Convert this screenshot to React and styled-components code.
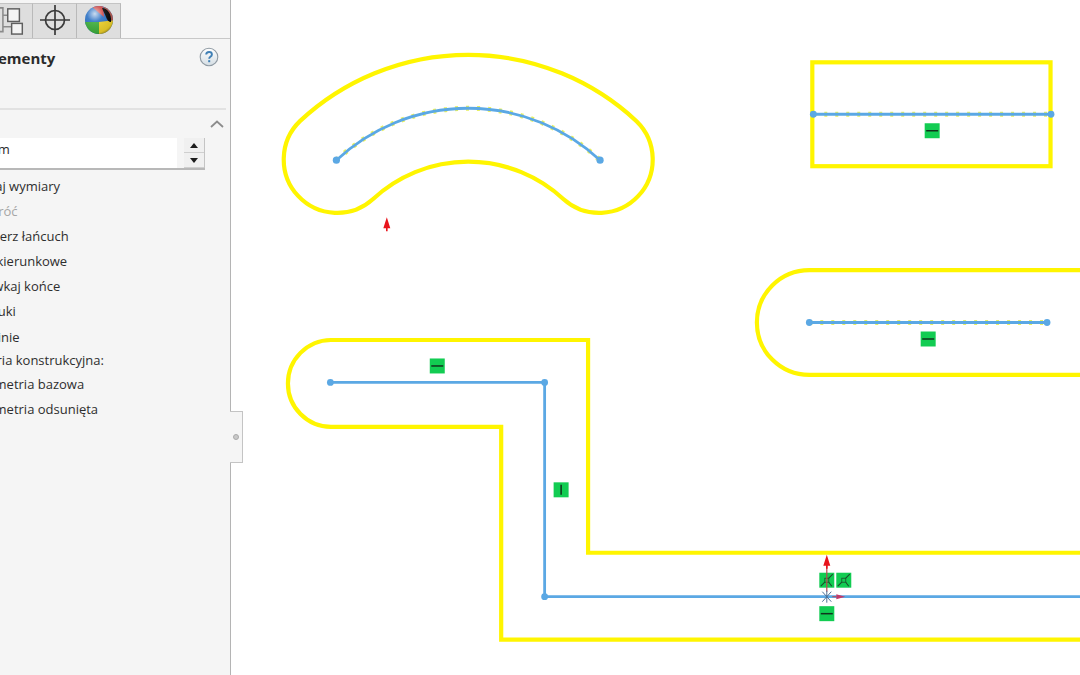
import styled, { createGlobalStyle } from "styled-components";

const GlobalStyle = createGlobalStyle`
  html, body {
    margin: 0;
    padding: 0;
    background: #ffffff;
  }
  * {
    box-sizing: border-box;
  }
`;

const YELLOW = "#fff500";
const BLUE = "#5ba8e4";

const opcje = [
  { tekst: "Dodaj wymiary", start: -30 },
  { tekst: "Odwróć", start: -30 },
  { tekst: "Wybierz łańcuch", start: -30 },
  { tekst: "Dwukierunkowe", start: -31 },
  { tekst: "Zakrywkaj końce", start: -40 },
  { tekst: "Łuki", start: -9, h: 26 },
  { tekst: "Linie", start: -9, h: 23 },
  { tekst: "Geometria konstrukcyjna:", start: -52, h: 24 },
  { tekst: "Geometria bazowa", start: -30 },
  { tekst: "Geometria odsunięta", start: -30 },
];

function IkonaDrzewo() {
  return (
    <svg width="33" height="32" viewBox="0 0 33 32">
      <g fill="none" stroke="#8b8b8b" strokeWidth="1.6">
        <path d="M-1 3.5H3V28H-1M3 11H8M3 23H12" />
      </g>
      <g fill="#f4f4f4" stroke="#5f5f5f" strokeWidth="1.5">
        <rect x="8" y="4.5" width="12" height="13" />
        <rect x="12" y="19.5" width="11" height="11" />
      </g>
    </svg>
  );
}

function IkonaCelownik() {
  return (
    <svg width="32" height="32" viewBox="0 0 32 32">
      <g fill="none" stroke="#3a3a3a" strokeWidth="1.7">
        <circle cx="16" cy="16" r="9.5" />
        <path d="M16 1v30M1 16h30" />
      </g>
    </svg>
  );
}

function IkonaKula() {
  return (
    <svg width="30" height="30" viewBox="0 0 30 30">
      <defs>
        <clipPath id="kula">
          <circle cx="15" cy="15" r="14" />
        </clipPath>
        <radialGradient id="polysk" cx="0.35" cy="0.28" r="0.8">
          <stop offset="0" stopColor="#ffffff" stopOpacity="0.75" />
          <stop offset="0.35" stopColor="#ffffff" stopOpacity="0.1" />
          <stop offset="0.85" stopColor="#000000" stopOpacity="0.08" />
          <stop offset="1" stopColor="#000000" stopOpacity="0.4" />
        </radialGradient>
      </defs>
      <g clipPath="url(#kula)">
        <rect width="30" height="30" fill="#2d72c4" />
        <path d="M0 17 L15 17 L15 30 L0 30Z" fill="#3fae3c" />
        <path d="M15 17 L30 15 L30 30 L15 30Z" fill="#eccf2a" />
        <path d="M6 0 L19 0 L20 12 L15 8Z" fill="#cf4d4a" />
        <path d="M19 0 L30 0 L30 15 L24 16Z" fill="#b55a50" />
        <path d="M18 3 C23 3 28 9 27 17 C25 17 23 15 22 12 C21 9 19 6 18 3Z" fill="#060606" />
      </g>
      <circle cx="15" cy="15" r="14" fill="url(#polysk)" />
    </svg>
  );
}

function IkonaPomoc() {
  return (
    <svg width="20" height="20" viewBox="0 0 20 20">
      <defs>
        <linearGradient id="pomoc" x1="0" y1="0" x2="0" y2="1">
          <stop offset="0" stopColor="#ffffff" />
          <stop offset="1" stopColor="#d4dde3" />
        </linearGradient>
      </defs>
      <circle cx="10" cy="10" r="8.8" fill="url(#pomoc)" stroke="#8f9aa3" strokeWidth="1.1" />
      <path
        d="M7.2 7.6c0-1.6 1.2-2.6 2.9-2.6s2.8 1 2.8 2.4c0 1.2-.7 1.8-1.5 2.4-.8.6-1.2 1-1.2 2"
        fill="none"
        stroke="#3f7fb5"
        strokeWidth="1.9"
      />
      <rect x="9.2" y="13.2" width="2" height="2" fill="#3f7fb5" />
    </svg>
  );
}

function Strzalka({ x, y }) {
  return <path d={`M${x} ${y - 7}L${x + 3.5} ${y + 4}H${x + 0.8}V${y + 7}H${x - 0.8}V${y + 4}H${x - 3.5}Z`} fill="#e8141c" />;
}

function Relacja({ x, y, pion }) {
  return (
    <g>
      <rect x={x - 7.5} y={y - 7.5} width="15" height="15" fill="#12cc52" />
      {pion ? (
        <path d={`M${x} ${y - 5}V${y + 5}`} stroke="#10331c" strokeWidth="1.5" />
      ) : (
        <path d={`M${x - 6} ${y}H${x + 6}`} stroke="#10331c" strokeWidth="1.5" />
      )}
    </g>
  );
}

function RelacjaPunkt({ x, y }) {
  return (
    <g>
      <rect x={x - 7.5} y={y - 7.5} width="15" height="15" fill="#12cc52" />
      <path d={`M${x - 6} ${y + 6}L${x - 2} ${y + 2}M${x + 2} ${y - 2}L${x + 6} ${y - 6}M${x + 2} ${y + 2}L${x + 5} ${y + 6}`} stroke="#1d4a2c" strokeWidth="1.1" fill="none" />
      <rect x={x - 2} y={y - 2} width="4" height="4" fill="none" stroke="#1d4a2c" strokeWidth="0.8" />
    </g>
  );
}

function Szkic() {
  return (
    <Rysunek viewBox="230 0 850 675">
      <g fill="none" stroke={YELLOW} strokeWidth="4.2">
        <path d="M372 199.1A140 140 0 0 1 563 199.1A53.5 53.5 0 0 0 636 120.9A247 247 0 0 0 299 120.9A53.5 53.5 0 0 0 372 199.1Z" />
        <rect x="812" y="62" width="238.5" height="104" />
        <path d="M1120 270H809A52.5 52.5 0 0 0 809 375H1120" />
        <path d="M1100 553H587.5V340H330A43.5 43.5 0 0 0 287 383.5A43.5 43.5 0 0 0 330 427H500.5V640H1100" />
      </g>

      <g fill="none" stroke="#e8f060" strokeWidth="5" strokeDasharray="3 8">
        <path d="M335.5 160A193.5 193.5 0 0 1 599.5 160" />
        <path d="M813 114H1051" />
        <path d="M809 322.5H1047" />
      </g>

      <g fill="none" stroke={BLUE} strokeWidth="2.8">
        <path d="M335.5 160A193.5 193.5 0 0 1 599.5 160" />
        <path d="M813 114H1051" />
        <path d="M809 322.5H1047" />
        <path d="M329.5 382.5H544V597H1080" />
      </g>

      <g fill={BLUE}>
        <circle cx="335.5" cy="160" r="3.6" />
        <circle cx="599.5" cy="160" r="3.6" />
        <circle cx="813" cy="114" r="3.4" />
        <circle cx="1051" cy="114" r="3.4" />
        <circle cx="809" cy="322.5" r="3.4" />
        <circle cx="1047" cy="322.5" r="3.4" />
        <circle cx="329.5" cy="382.5" r="3.4" />
        <circle cx="544" cy="382.5" r="3.4" />
        <circle cx="544" cy="597" r="3.4" />
      </g>

      <Relacja x={932} y={130.5} />
      <Relacja x={928} y={339} />
      <Relacja x={436.5} y={366} />
      <Relacja x={560.5} y={490} pion />
      <Relacja x={826.5} y={614} />
      <RelacjaPunkt x={826.5} y={580.5} />
      <RelacjaPunkt x={843.5} y={580.5} />

      <Strzalka x={386} y={224} />
      <path d="M826.5 565V592" stroke="#b8474f" strokeWidth="1.2" />
      <Strzalka x={826.5} y={562} />
      <path d="M836 594.5L845 597L836 599.5Z" fill="#c23a6a" />
      <path d="M832 597H836" stroke="#b8474f" strokeWidth="1" />
      <path d="M822 592L831 602M831 592L822 602M826.5 591V603" stroke="#4d6f95" strokeWidth="1" fill="none" />
    </Rysunek>
  );
}

export default function App() {
  return (
    <>
      <GlobalStyle />
      <Ekran>
        <Panel>
          <Zakladki>
            <Zakladka $szer={33}>
              <IkonaDrzewo />
            </Zakladka>
            <Zakladka $szer={44}>
              <IkonaCelownik />
            </Zakladka>
            <Zakladka $szer={44}>
              <IkonaKula />
            </Zakladka>
          </Zakladki>

          <Naglowek>
            <Tytul>Elementy</Tytul>
            <IkonaPomoc />
          </Naglowek>

          <Sekcja>
            <Chevron viewBox="0 0 14 8">
              <path d="M1 7L7 1.5L13 7" fill="none" stroke="#8c8c8c" strokeWidth="1.8" />
            </Chevron>
          </Sekcja>

          <PoleWiersz>
            <Pole>1.00mm</Pole>
            <Spinner>
              <SpinnerPrzycisk>
                <Trojkat />
              </SpinnerPrzycisk>
              <SpinnerPrzycisk>
                <Trojkat $dol />
              </SpinnerPrzycisk>
            </Spinner>
          </PoleWiersz>

          <Lista>
            {opcje.map((o) => (
              <Opcja key={o.tekst} $start={o.start} $h={o.h} $wylaczone={o.tekst === "Odwróć"}>
                {o.tekst}
              </Opcja>
            ))}
          </Lista>
        </Panel>

        <Uchwyt>
          <Kropka />
        </Uchwyt>

        <Plotno>
          <Szkic />
        </Plotno>
      </Ekran>
    </>
  );
}

const Ekran = styled.div`
  position: relative;
  display: flex;
  width: 1080px;
  height: 675px;
  overflow: hidden;
  background: #ffffff;
`;

const Panel = styled.aside`
  width: 231px;
  height: 100%;
  flex-shrink: 0;
  overflow: hidden;
  background: #f5f5f5;
  border-right: 1px solid #b4b4b4;
  font-family: "Open Sans", "Noto Sans", sans-serif;
  color: #2a2a2a;
`;

const Zakladki = styled.div`
  display: flex;
  height: 39px;
  padding-top: 3px;
  border-bottom: 1px solid #c8c8c8;
`;

const Zakladka = styled.div`
  width: ${(p) => p.$szer}px;
  display: flex;
  align-items: center;
  justify-content: center;
  padding-bottom: 2px;
  background: #dedede;
  border-right: 1px solid #b9b9b9;
  border-top: 1px solid #c4c4c4;
`;

const Naglowek = styled.div`
  display: flex;
  align-items: flex-start;
  justify-content: space-between;
  height: 71px;
  padding: 8px 7px 0 0;
  border-bottom: 2px solid #e2e2e2;
  margin-right: 4px;
`;

const Tytul = styled.h1`
  margin: 0 0 0 -15px;
  font-size: 15px;
  line-height: 22px;
  font-weight: 700;
  color: #2b2b2b;
`;

const Sekcja = styled.div`
  display: flex;
  justify-content: flex-end;
  align-items: center;
  height: 28px;
  padding-right: 6px;
`;

const Chevron = styled.svg`
  width: 14px;
  height: 8px;
`;

const PoleWiersz = styled.div`
  display: flex;
  gap: 7px;
  width: 205px;
  height: 32px;
  border-bottom: 2px solid #b8b8b8;
`;

const Pole = styled.div`
  flex: 1;
  margin-left: -40px;
  height: 30px;
  background: #ffffff;
  font-size: 13px;
  line-height: 23px;
`;

const Spinner = styled.div`
  display: flex;
  flex-direction: column;
  width: 21px;
  background: #f0f0f0;
  border-right: 1px solid #c4c4c4;
`;

const SpinnerPrzycisk = styled.div`
  flex: 1;
  display: flex;
  align-items: center;
  justify-content: center;
  border-bottom: 1px solid #cfcfcf;
`;

const Trojkat = styled.div`
  width: 0;
  height: 0;
  border-left: 4.5px solid transparent;
  border-right: 4.5px solid transparent;
  ${(p) => (p.$dol ? "border-top: 5px solid #1c1c1c;" : "border-bottom: 5px solid #1c1c1c;")}
`;

const Lista = styled.div`
  display: flex;
  flex-direction: column;
  padding-top: 4px;
`;

const Opcja = styled.div`
  height: ${(p) => p.$h || 25}px;
  margin-left: ${(p) => p.$start}px;
  font-size: 13px;
  line-height: 25px;
  white-space: nowrap;
  color: ${(p) => (p.$wylaczone ? "#a6a6a6" : "#2e2e2e")};
`;

const Uchwyt = styled.div`
  position: absolute;
  left: 230px;
  top: 411px;
  width: 13px;
  height: 52px;
  display: flex;
  align-items: center;
  justify-content: center;
  background: #f5f5f5;
  border: 1px solid #c4c4c4;
  border-left: none;
`;

const Kropka = styled.div`
  width: 6px;
  height: 6px;
  border-radius: 50%;
  background: #c9c9c9;
  border: 1px solid #aaaaaa;
`;

const Plotno = styled.main`
  flex: 1;
  height: 100%;
`;

const Rysunek = styled.svg`
  display: block;
  width: 100%;
  height: 100%;
`;
